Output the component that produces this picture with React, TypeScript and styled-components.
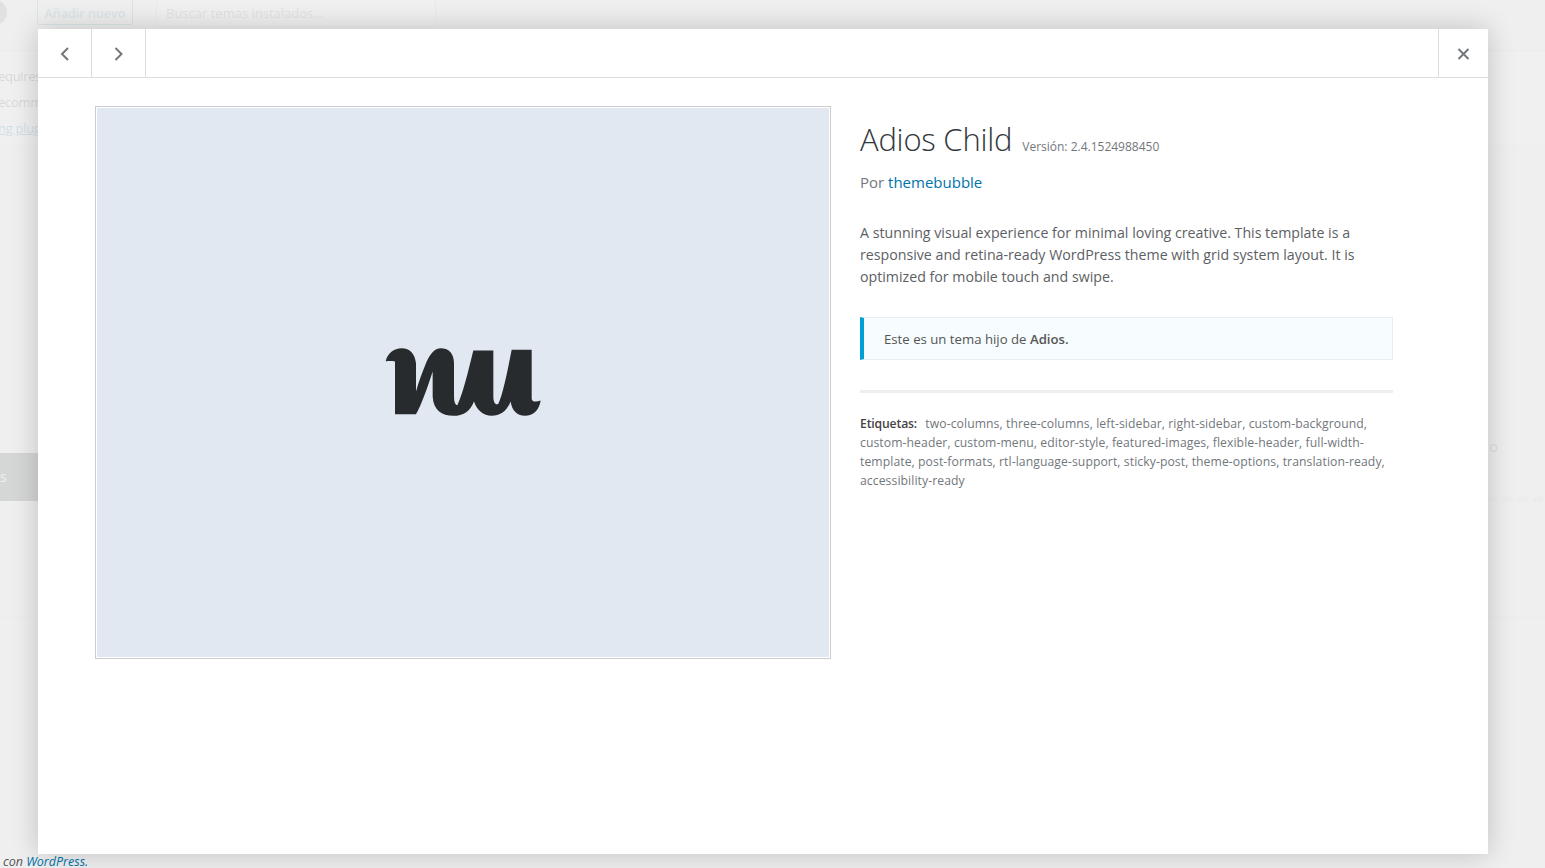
import React, { FC } from 'react';
import styled, { createGlobalStyle } from 'styled-components';

const GlobalStyle = createGlobalStyle`
  html, body {
    margin: 0;
    padding: 0;
    height: 100%;
    overflow: hidden;
    background: #f1f1f1;
    font-family: "Open Sans", "Noto Sans", sans-serif;
  }
`;

const Page = styled.div`
  position: relative;
  width: 1545px;
  height: 868px;
  overflow: hidden;
  color: #444;
`;

const TopBar = styled.div`
  display: flex;
  align-items: flex-end;
  height: 28px;
  margin-top: -1px;
  padding-left: 37px;
`;

const Avatar = styled.div`
  position: absolute;
  left: -18px;
  top: 0;
  width: 25px;
  height: 25px;
  border-radius: 50%;
  background: #888;
`;

const AddButton = styled.div`
  box-sizing: border-box;
  width: 96px;
  height: 26px;
  margin-bottom: 2px;
  border: 1px solid #5a9fc0;
  border-radius: 2px;
  color: #5a9fc0;
  font-size: 12.5px;
  font-weight: 600;
  line-height: 27px;
  text-align: center;
`;

const SearchBox = styled.div`
  box-sizing: border-box;
  width: 280px;
  height: 28px;
  margin-left: 23px;
  padding-left: 9px;
  border: 1px solid #ccc;
  border-radius: 3px;
  background: #fff;
  color: #888;
  font-size: 13px;
  line-height: 27px;
`;

const Notice = styled.div`
  margin-top: 23px;
  height: 96px;
  padding-top: 12px;
  box-sizing: border-box;
  border-top: 1px solid #ddd;
  border-bottom: 1px solid #ddd;
  background: #fff;
  margin-left: -2px;
`;

const NoticeLine = styled.div<{ $link?: boolean }>`
  font-size: 13px;
  letter-spacing: -0.3px;
  line-height: 26px;
  color: ${p => (p.$link ? '#0073aa' : '#444')};
  text-decoration: ${p => (p.$link ? 'underline' : 'none')};
  white-space: nowrap;
`;

const ThemeArea = styled.div`
  height: 472px;
  border-bottom: 1px solid #ddd;
  display: flex;
  justify-content: space-between;
  padding-top: 307px;
  box-sizing: border-box;
`;

const ActiveTab = styled.div`
  width: 38px;
  height: 48px;
  background: #32373c;
  color: #fff;
  font-size: 14px;
  line-height: 48px;
`;

const SideWord = styled.div`
  font-size: 14px;
  color: #777;
  padding-right: 47px;
  line-height: 20px;
  margin-top: -16px;
`;

const Dashes = styled.div`
  position: absolute;
  left: 1488px;
  top: 497px;
  width: 57px;
  height: 5px;
  background: repeating-linear-gradient(90deg, #ddd 0 10px, transparent 10px 15px);
`;

const Backdrop = styled.div`
  position: absolute;
  inset: 0;
  background: rgba(238, 238, 238, 0.87);
`;

const Footer = styled.div`
  position: absolute;
  left: 3px;
  top: 854px;
  font-size: 12.5px;
  line-height: 16px;
  font-style: italic;
  color: #555;
`;

const FooterLink = styled.a`
  color: #0073aa;
`;

const Modal = styled.div`
  position: absolute;
  left: 38px;
  top: 29px;
  width: 1450px;
  height: 825px;
  background: #fff;
  box-shadow: 0 0 26px rgba(0, 0, 0, 0.2);
  display: flex;
  flex-direction: column;
`;

const ModalHeader = styled.div`
  display: flex;
  height: 48px;
  border-bottom: 1px solid #ddd;
  flex-shrink: 0;
`;

const HeaderButton = styled.button<{ $side: 'left' | 'right'; $wide?: boolean }>`
  box-sizing: content-box;
  width: ${p => (p.$wide ? 49 : 53)}px;
  height: 46px;
  padding: 2px 0 0;
  border: 0;
  background: none;
  color: #72777c;
  display: flex;
  align-items: center;
  justify-content: center;
  border-${p => p.$side}: 1px solid #ddd;
`;

const HeaderGap = styled.div`
  flex: 1;
`;

const ModalBody = styled.div`
  display: flex;
  padding: 28px 95px 0 57px;
  gap: 29px;
`;

const Screenshot = styled.div`
  box-sizing: border-box;
  width: 736px;
  height: 553px;
  padding: 1px;
  border: 1px solid #ccc;
  flex-shrink: 0;
`;

const ScreenshotFill = styled.div`
  box-sizing: border-box;
  height: 100%;
  padding-bottom: 2px;
  background: #e1e8f2;
  display: flex;
  align-items: center;
  justify-content: center;
`;

const Info = styled.div`
  width: 533px;
  padding-top: 13px;
`;

const TitleRow = styled.div`
  display: flex;
  align-items: baseline;
  gap: 10px;
`;

const ThemeName = styled.h2`
  margin: 0;
  font-size: 31px;
  font-weight: 300;
  line-height: 40px;
  letter-spacing: -0.23px;
  color: #32373c;
`;

const Version = styled.span`
  font-size: 12px;
  color: #72777c;
`;

const Author = styled.p`
  margin: 12px 0 0;
  font-size: 15px;
  line-height: 22px;
  color: #72777c;
`;

const AuthorLink = styled.a`
  color: #0073aa;
`;

const Description = styled.p`
  margin: 29px 0 0;
  font-size: 14.2px;
  line-height: 22px;
  color: #5c6064;
`;

const ParentNotice = styled.div`
  box-sizing: border-box;
  height: 43px;
  margin-top: 29px;
  padding-left: 20px;
  border: 1px solid #e9eef1;
  border-left: 4px solid #00a0d2;
  background: #f7fcfe;
  color: #555;
  font-size: 13.2px;
  line-height: 42px;
`;

const ParentName = styled.strong`
  font-weight: 600;
`;

const Divider = styled.hr`
  height: 3px;
  margin: 30px 0 0;
  border: 0;
  background: #eee;
`;

const Tags = styled.p`
  margin: 21px 0 0;
  font-size: 12.2px;
  line-height: 19px;
  color: #72777c;
  letter-spacing: 0.08px;
`;

const TagLabel = styled.span`
  font-weight: 600;
  color: #444;
  letter-spacing: -0.15px;
  margin-right: 5px;
`;

const Logo: FC = () => (
  <svg width="156" height="68" viewBox="45 55 468 203" aria-hidden="true">
    <path
      fill="#272b2d"
      d="M47 95 C52 70 72 55 95 55 C120 55 135 72 138 100 L138 185 C146 155 158 125 170 95 C182 68 197 55 212 55 C238 55 252 72 252 100 L252 200 C252 218 257 226 262 226 C280 190 298 110 310 62 L370 62 L370 200 C370 220 378 227 385 222 C400 190 415 110 425 60 L485 60 L485 205 C485 215 495 218 512 212 C508 240 490 258 465 258 C440 258 425 240 422 215 C410 245 390 258 365 258 C340 258 320 240 312 215 C300 245 280 258 250 258 C215 258 190 240 188 200 L188 125 C175 165 155 225 138 253 L75 253 L75 95 C65 93 55 93 47 95 Z"
    />
  </svg>
);

const Chevron: FC<{ d: string }> = ({ d }) => (
  <svg width="20" height="20" viewBox="0 0 20 20" aria-hidden="true">
    <path d={d} fill="none" stroke="currentColor" strokeWidth="2" />
  </svg>
);

const App: FC = () => (
  <Page>
    <GlobalStyle />
    <Avatar />
    <TopBar>
      <AddButton>Añadir nuevo</AddButton>
      <SearchBox>Buscar temas instalados...</SearchBox>
    </TopBar>
    <Notice>
      <NoticeLine>equires the following plugin</NoticeLine>
      <NoticeLine>ecommends the following plugin</NoticeLine>
      <NoticeLine $link>ng plugins</NoticeLine>
    </Notice>
    <ThemeArea>
      <ActiveTab>s</ActiveTab>
      <SideWord>o</SideWord>
    </ThemeArea>
    <Dashes />
    <Backdrop />
    <Footer>
      con <FooterLink>WordPress.</FooterLink>
    </Footer>
    <Modal>
      <ModalHeader>
        <HeaderButton $side="right">
          <Chevron d="M13 4 L7 10 L13 16" />
        </HeaderButton>
        <HeaderButton $side="right">
          <Chevron d="M6.5 4 L12.5 10 L6.5 16" />
        </HeaderButton>
        <HeaderGap />
        <HeaderButton $side="left" $wide>
          <Chevron d="M4.5 5 L14.5 15 M14.5 5 L4.5 15" />
        </HeaderButton>
      </ModalHeader>
      <ModalBody>
        <Screenshot>
          <ScreenshotFill>
            <Logo />
          </ScreenshotFill>
        </Screenshot>
        <Info>
          <TitleRow>
            <ThemeName>Adios Child</ThemeName>
            <Version>Versión: 2.4.1524988450</Version>
          </TitleRow>
          <Author>
            Por <AuthorLink>themebubble</AuthorLink>
          </Author>
          <Description>
            A stunning visual experience for minimal loving creative. This template is a responsive and
            retina-ready WordPress theme with grid system layout. It is optimized for mobile touch and swipe.
          </Description>
          <ParentNotice>
            Este es un tema hijo de <ParentName>Adios.</ParentName>
          </ParentNotice>
          <Divider />
          <Tags>
            <TagLabel>Etiquetas:</TagLabel> two-columns, three-columns, left-sidebar, right-sidebar,
            custom-background, custom-header, custom-menu, editor-style, featured-images, flexible-header,
            full-width-template, post-formats, rtl-language-support, sticky-post, theme-options,
            translation-ready, accessibility-ready
          </Tags>
        </Info>
      </ModalBody>
    </Modal>
  </Page>
);

export default App;
